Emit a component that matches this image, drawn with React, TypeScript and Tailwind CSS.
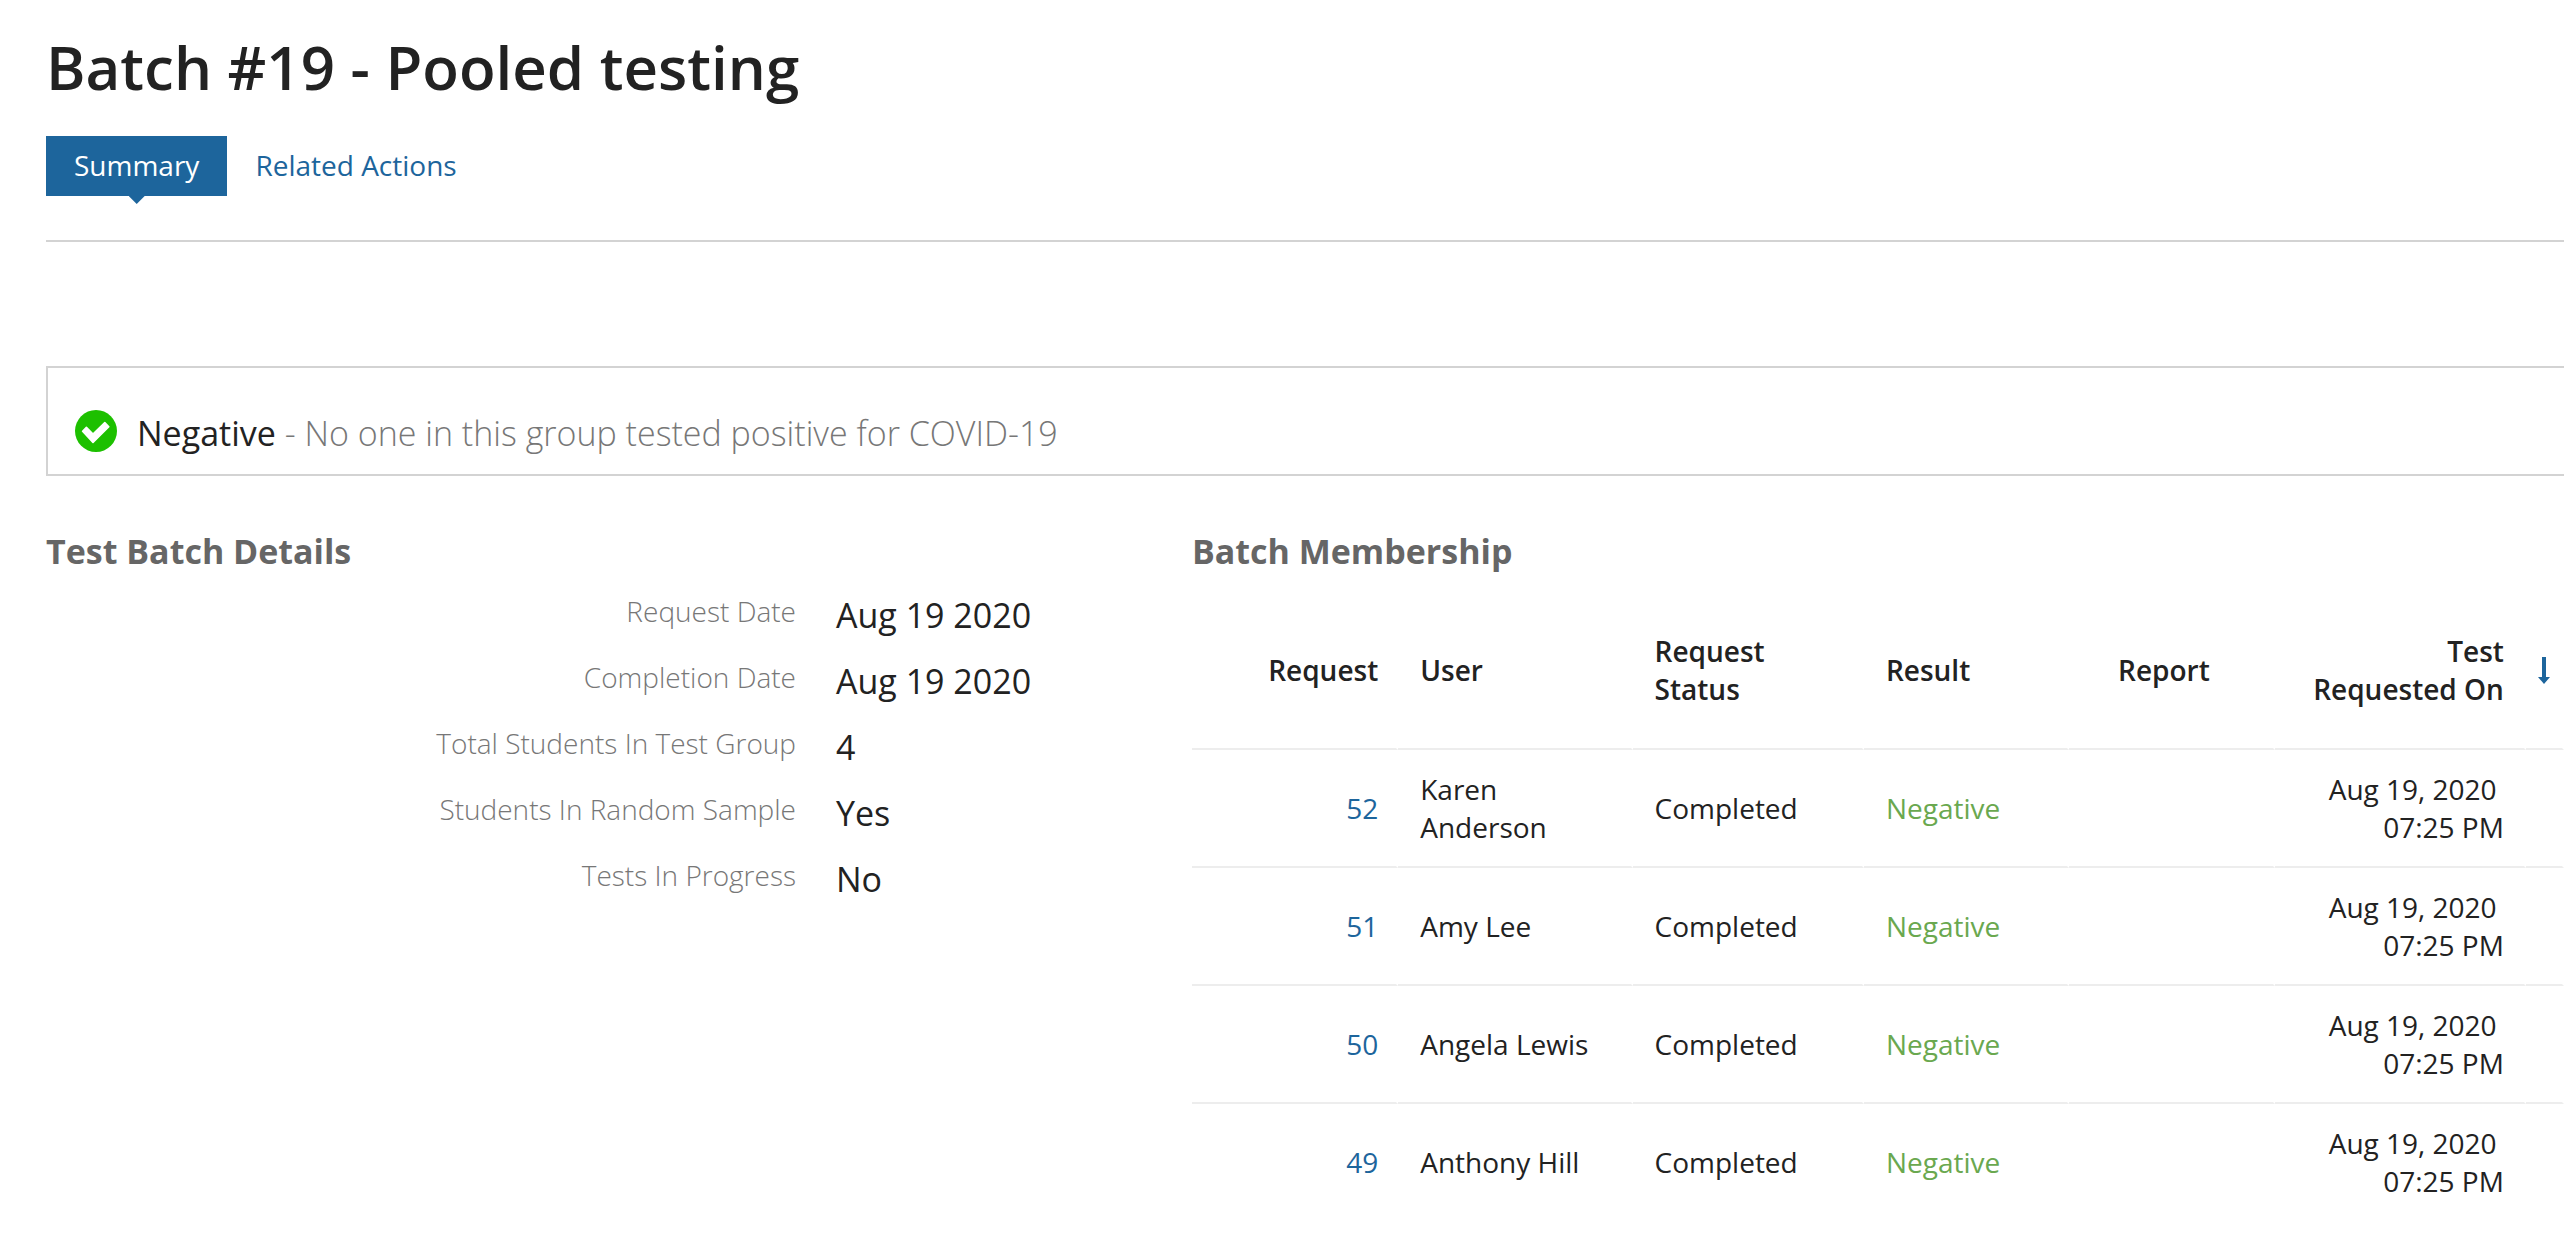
type Membership = { id: number; user: string; status: string; result: string; date: string; time: string };

const details = [
  { label: "Request Date", value: "Aug 19 2020" },
  { label: "Completion Date", value: "Aug 19 2020" },
  { label: "Total Students In Test Group", value: "4" },
  { label: "Students In Random Sample", value: "Yes" },
  { label: "Tests In Progress", value: "No" },
];

const members: Membership[] = [
  { id: 52, user: "Karen Anderson", status: "Completed", result: "Negative", date: "Aug 19, 2020", time: "07:25 PM" },
  { id: 51, user: "Amy Lee", status: "Completed", result: "Negative", date: "Aug 19, 2020", time: "07:25 PM" },
  { id: 50, user: "Angela Lewis", status: "Completed", result: "Negative", date: "Aug 19, 2020", time: "07:25 PM" },
  { id: 49, user: "Anthony Hill", status: "Completed", result: "Negative", date: "Aug 19, 2020", time: "07:25 PM" },
];

function CheckCircle() {
  return (
    <svg viewBox="0 0 42 42" className="size-[42px] shrink-0" aria-hidden="true">
      <circle cx="21" cy="21" r="21" fill="#1dc000" />
      <path
        d="M7.6 21.2L11.4 17.4L18 24L29.8 12.6L33.8 16.7L18 32.4Z"
        fill="#fff"
        stroke="#fff"
        strokeWidth="1.6"
        strokeLinejoin="round"
      />
    </svg>
  );
}

function SortArrow() {
  return (
    <svg viewBox="0 0 12 28" className="h-7 w-3" aria-hidden="true">
      <path d="M4 1h4v20h4l-6 7l-6-7h4z" fill="#1d659c" />
    </svg>
  );
}

export default function App() {
  return (
    <main className="overflow-hidden bg-white pt-[26px] pl-[46px] font-['Open_Sans',sans-serif] text-[28px] leading-[38px] text-[#222222]">
      <h1 className="text-[60px] leading-[82px] font-semibold">Batch #19 - Pooled testing</h1>

      <nav className="mt-7 flex border-b-2 border-[#d3d3d3] pb-11">
        <a href="#summary" className="relative bg-[#1d659c] px-7 pt-2.5 pb-3 text-white">
          Summary
          <span className="absolute top-full left-1/2 h-2 w-4 -translate-x-1/2 bg-[#1d659c] [clip-path:polygon(0_0,100%_0,50%_100%)]" />
        </a>
        <a href="#related-actions" className="px-7 pt-2.5 pb-3 text-[#1d659c]">
          Related Actions
        </a>
      </nav>

      <section className="mt-[124px] flex gap-5 border-2 border-r-0 border-[#d3d3d3] pt-[42px] pr-7 pb-[18px] pl-[27px]">
        <CheckCircle />
        <p className="text-[34px] leading-[46px]">
          Negative <span className="font-light text-[#777777]">- No one in this group tested positive for COVID-19</span>
        </p>
      </section>

      <div className="mt-[52px] flex gap-[38px]">
        <section className="w-[44%] shrink-0">
          <h2 className="text-[34px] leading-[46px] font-bold text-[#666666]">Test Batch Details</h2>
          <dl className="mt-[18px] flex flex-col gap-5">
            {details.map((d) => (
              <div key={d.label} className="flex gap-10">
                <dt className="w-[750px] text-right font-light text-[#777777]">{d.label}</dt>
                <dd className="text-[34px] leading-[46px]">{d.value}</dd>
              </div>
            ))}
          </dl>
        </section>

        <section className="min-w-0 flex-1">
          <h2 className="text-[34px] leading-[46px] font-bold text-[#666666]">Batch Membership</h2>
          <table className="mt-[18px] w-full table-fixed border-separate border-spacing-0 [&_td]:border-r-2 [&_td]:border-b-2 [&_td]:border-r-transparent [&_td]:border-b-[#ededed] [&_th]:border-r-2 [&_th]:border-b-2 [&_th]:border-r-transparent [&_th]:border-b-[#ededed]">
            <colgroup>
              <col className="w-[206px]" />
              <col className="w-[234px]" />
              <col className="w-[231px]" />
              <col className="w-[205px]" />
              <col className="w-[205px]" />
              <col className="w-[251px]" />
              <col className="w-[38px]" />
            </colgroup>
            <thead>
              <tr className="text-left [&>th]:py-10 [&>th]:font-semibold">
                <th className="pr-[18px] text-right">Request</th>
                <th className="px-[22px]">User</th>
                <th className="px-[22px]">
                  Request
                  <br />
                  Status
                </th>
                <th className="px-[22px]">Result</th>
                <th className="pr-3.5 text-center">Report</th>
                <th className="pr-5 text-right">
                  Test
                  <br />
                  Requested On
                </th>
                <th className="pl-3">
                  <button type="button" aria-label="Sort by test requested on" className="block">
                    <SortArrow />
                  </button>
                </th>
              </tr>
            </thead>
            <tbody>
              {members.map((m) => (
                <tr key={m.id} className="last:[&>td]:border-b-transparent [&>td]:py-5">
                  <td className="pr-[18px] text-right">
                    <a href={`#request-${m.id}`} className="text-[#1d659c]">
                      {m.id}
                    </a>
                  </td>
                  <td className="px-[22px]">{m.user}</td>
                  <td className="px-[22px]">{m.status}</td>
                  <td className="px-[22px] text-[#6aa84f]">{m.result}</td>
                  <td />
                  <td className="pr-5 text-right">
                    {m.date}&nbsp;
                    <br />
                    {m.time}
                  </td>
                  <td />
                </tr>
              ))}
            </tbody>
          </table>
        </section>
      </div>
    </main>
  );
}
